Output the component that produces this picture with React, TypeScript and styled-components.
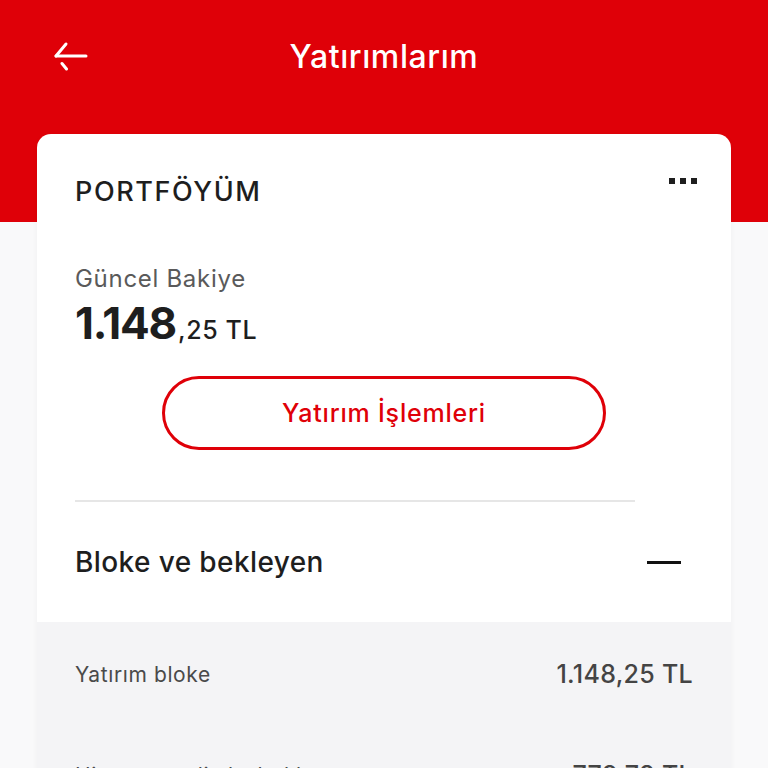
import * as React from 'react';
import styled, { createGlobalStyle } from 'styled-components';

const RED = '#df0008';

const GlobalStyle = createGlobalStyle`
  html, body {
    margin: 0;
    padding: 0;
    background: #f9f9fa;
    font-family: Inter, "Noto Sans", "Liberation Sans", sans-serif;
    -webkit-font-smoothing: antialiased;
  }
  * { box-sizing: border-box; }
`;

const Page = styled.div`
  width: 768px;
  height: 768px;
  overflow: hidden;
  background: #f9f9fa;
`;

const Header = styled.header`
  height: 222px;
  background: ${RED};
`;

const TopBar = styled.div`
  height: 112px;
  display: grid;
  grid-template-columns: 120px 1fr 120px;
  align-items: center;
`;

const BackButton = styled.button`
  justify-self: start;
  margin-left: 50px;
  width: 40px;
  height: 40px;
  padding: 0;
  border: 0;
  background: none;
  display: flex;
  align-items: center;
  justify-content: center;
`;

const Title = styled.h1`
  margin: 0;
  text-align: center;
  color: #fff;
  font-size: 32px;
  font-weight: 500;
  letter-spacing: 0.6px;
`;

const Card = styled.section`
  margin: -88px 37px 0;
  background: #fff;
  border-radius: 14px 14px 0 0;
  box-shadow: 0 2px 6px rgba(0, 0, 0, 0.04);
  overflow: hidden;
`;

const Body = styled.div`
  padding: 40px 38px 0;
`;

const CardHead = styled.div`
  display: flex;
  justify-content: space-between;
  align-items: flex-start;
`;

const CardTitle = styled.h2`
  margin: 0;
  font-size: 27px;
  font-weight: 500;
  color: #1e1e1e;
  letter-spacing: 1.6px;
  line-height: 36px;
`;

const Dots = styled.div`
  display: flex;
  gap: 5px;
  margin-top: 4px;
  margin-right: -4px;
`;

const Dot = styled.span`
  width: 6px;
  height: 6px;
  background: #1e1e1e;
`;

const Label = styled.div`
  margin-top: 54px;
  font-size: 24px;
  color: #5a5a5a;
  line-height: 30px;
  letter-spacing: 0.7px;
`;

const Amount = styled.div`
  margin-top: 4px;
  color: #1e1e1e;
  display: flex;
  align-items: baseline;
`;

const AmountMain = styled.span`
  font-size: 44px;
  font-weight: 700;
  letter-spacing: -1.2px;
  line-height: 50px;
`;

const AmountRest = styled.span`
  font-size: 25px;
  font-weight: 500;
  margin-left: 2px;
  letter-spacing: 0.6px;
`;

const ActionButton = styled.button`
  display: block;
  margin: 28px auto 0;
  width: 444px;
  height: 74px;
  border: 3px solid ${RED};
  border-radius: 40px;
  background: #fff;
  color: ${RED};
  font-family: inherit;
  font-size: 25px;
  font-weight: 500;
  letter-spacing: 0.8px;
`;

const Divider = styled.hr`
  margin: 50px 58px 0 0;
  border: 0;
  height: 2px;
  background: #e6e6e6;
`;

const SectionHead = styled.div`
  height: 120px;
  display: flex;
  align-items: center;
  justify-content: space-between;
  padding-right: 12px;
`;

const SectionTitle = styled.h3`
  margin: 0;
  font-size: 28px;
  font-weight: 500;
  color: #1e1e1e;
  letter-spacing: 0.4px;
`;

const Minus = styled.span`
  width: 34px;
  height: 3px;
  background: #111;
`;

const Details = styled.div`
  background: #f4f4f6;
  padding: 0 38px;
`;

const DetailRow = styled.div`
  height: 98px;
  display: flex;
  align-items: center;
  justify-content: space-between;
  &:first-child {
    height: 104px;
  }
`;

const DetailLabel = styled.span`
  font-size: 21px;
  color: #4a4a4a;
  letter-spacing: 0.6px;
`;

const DetailValue = styled.span`
  font-size: 25px;
  font-weight: 500;
  color: #444;
  letter-spacing: 0.3px;
`;

const BackArrow = () => (
  <svg width="36" height="30" viewBox="0 0 36 30" fill="none">
    <path d="M4 15H34" stroke="#fff" strokeWidth="3" strokeLinecap="round" />
    <path d="M14 3L4 15" stroke="#fff" strokeWidth="3" strokeLinecap="round" />
    <path d="M10 22.5L14.5 28" stroke="#fff" strokeWidth="3" strokeLinecap="round" />
  </svg>
);

const details = [
  { label: 'Yatırım bloke', value: '1.148,25 TL' },
  { label: 'Hisse senedi alış bekleyen', value: '779,78 TL' },
];

export default function App() {
  return (
    <Page>
      <GlobalStyle />
      <Header>
        <TopBar>
          <BackButton aria-label="Geri">
            <BackArrow />
          </BackButton>
          <Title>Yatırımlarım</Title>
        </TopBar>
      </Header>
      <Card>
        <Body>
          <CardHead>
            <CardTitle>PORTFÖYÜM</CardTitle>
            <Dots>
              <Dot />
              <Dot />
              <Dot />
            </Dots>
          </CardHead>
          <Label>Güncel Bakiye</Label>
          <Amount>
            <AmountMain>1.148</AmountMain>
            <AmountRest>,25 TL</AmountRest>
          </Amount>
          <ActionButton>Yatırım İşlemleri</ActionButton>
          <Divider />
          <SectionHead>
            <SectionTitle>Bloke ve bekleyen</SectionTitle>
            <Minus />
          </SectionHead>
        </Body>
        <Details>
          {details.map((d) => (
            <DetailRow key={d.label}>
              <DetailLabel>{d.label}</DetailLabel>
              <DetailValue>{d.value}</DetailValue>
            </DetailRow>
          ))}
        </Details>
      </Card>
    </Page>
  );
}
